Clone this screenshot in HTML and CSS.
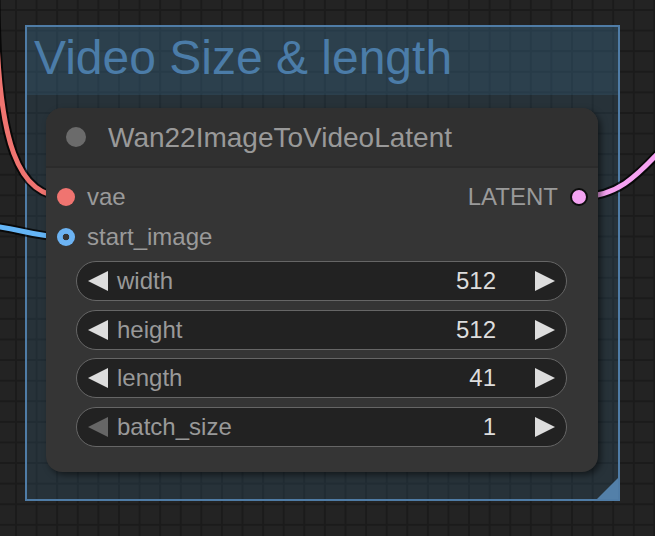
FILE: index.html
```html
<!DOCTYPE html>
<html>
<head>
<meta charset="utf-8">
<link rel="stylesheet" href="styles.css">
</head>
<body>
<div class="canvas">
  <div class="group">
    <div class="group-title">Video Size &amp; length</div>
    <div class="group-corner"></div>
  </div>
  <svg class="links" width="655" height="536" viewBox="0 0 655 536">
    <g fill="none" stroke-linecap="round">
      <path class="link-shadow" d="M -4 -10 C -4 150, 20 197, 66 197"/>
      <path class="link-red" d="M -4 -10 C -4 150, 20 197, 66 197"/>
      <path class="link-shadow" d="M -20 225 C 15 226, 30 237, 66 237"/>
      <path class="link-blue" d="M -20 225 C 15 226, 30 237, 66 237"/>
      <path class="link-shadow" d="M 579 197 C 615 197, 635 180, 670 140"/>
      <path class="link-pink" d="M 579 197 C 615 197, 635 180, 670 140"/>
    </g>
  </svg>
  <div class="node">
    <div class="node-header">
      <span class="node-dot"></span>
      <span class="node-title">Wan22ImageToVideoLatent</span>
    </div>
    <div class="node-body">
      <div class="slot-row">
        <div class="slot"><span class="dot dot-vae"></span><span>vae</span></div>
        <div class="slot slot-out"><span>LATENT</span><span class="dot dot-latent"></span></div>
      </div>
      <div class="slot-row">
        <div class="slot"><span class="dot dot-image"></span><span>start_image</span></div>
      </div>
      <div class="widgets">
        <div class="widget">
          <span class="arrow arrow-left"></span>
          <span class="w-label">width</span>
          <span class="w-value">512</span>
          <span class="arrow arrow-right"></span>
        </div>
        <div class="widget">
          <span class="arrow arrow-left"></span>
          <span class="w-label">height</span>
          <span class="w-value">512</span>
          <span class="arrow arrow-right"></span>
        </div>
        <div class="widget">
          <span class="arrow arrow-left"></span>
          <span class="w-label">length</span>
          <span class="w-value">41</span>
          <span class="arrow arrow-right"></span>
        </div>
        <div class="widget">
          <span class="arrow arrow-left arrow-disabled"></span>
          <span class="w-label">batch_size</span>
          <span class="w-value">1</span>
          <span class="arrow arrow-right"></span>
        </div>
      </div>
    </div>
  </div>
</div>
</body>
</html>
```
FILE: styles.css
```css
* { box-sizing: border-box; }

html, body {
  margin: 0;
  padding: 0;
  width: 655px;
  height: 536px;
  overflow: hidden;
}

body {
  font-family: "Liberation Sans", Arial, sans-serif;
  background-color: #232323;
  background-image:
    linear-gradient(to right, #1b1b1b 2px, transparent 2px),
    linear-gradient(to bottom, #1b1b1b 2px, transparent 2px);
  background-size: 20.6px 20.6px;
  background-position: 15px 9px;
}

.canvas {
  position: relative;
  width: 655px;
  height: 536px;
}

/* group */
.group {
  position: absolute;
  left: 25px;
  top: 25px;
  width: 595px;
  height: 476px;
  border: 2px solid #4f7ca6;
  background: rgba(63, 120, 158, 0.18);
}

.group-title {
  height: 68px;
  padding-left: 7px;
  background: rgba(63, 120, 158, 0.2);
  color: #4b7ca8;
  font-size: 48px;
  line-height: 62px;
  white-space: nowrap;
}

.group-corner {
  position: absolute;
  right: 0;
  bottom: 0;
  width: 21px;
  height: 21px;
  background: #5380a9;
  clip-path: polygon(100% 0, 100% 100%, 0 100%);
}

/* links */
.links {
  position: absolute;
  left: 0;
  top: 0;
}

.link-shadow {
  stroke: rgba(0, 0, 0, 0.75);
  stroke-width: 9;
}
.link-red { stroke: #f07470; stroke-width: 5; }
.link-blue { stroke: #64b5f6; stroke-width: 5; }
.link-pink { stroke: #f6a2f2; stroke-width: 5; }

/* node */
.node {
  position: absolute;
  left: 46px;
  top: 108px;
  width: 552px;
  height: 364px;
  background: #353535;
  border-radius: 16px;
  box-shadow: 3px 3px 6px rgba(0, 0, 0, 0.5);
  color: #9a9a9a;
}

.node-header {
  height: 60px;
  display: flex;
  align-items: center;
  padding-left: 20px;
  gap: 22px;
  background: #303030;
  border-bottom: 2px solid #2b2b2b;
  border-radius: 16px 16px 0 0;
}

.node-dot {
  width: 20px;
  height: 20px;
  border-radius: 50%;
  background: #6b6b6b;
}

.node-title {
  font-size: 28px;
  color: #999999;
  white-space: nowrap;
  padding-top: 2px;
}

.node-body {
  padding-top: 9px;
}

.slot-row {
  height: 40px;
  display: flex;
  align-items: center;
  justify-content: space-between;
  font-size: 24px;
}

.slot {
  display: flex;
  align-items: center;
  gap: 12px;
  padding-left: 11px;
}

.slot-out {
  padding-left: 0;
  padding-right: 10px;
  gap: 12px;
}

.dot {
  width: 18px;
  height: 18px;
  border-radius: 50%;
  flex: none;
}

.dot-vae { background: #f07470; }

.dot-image {
  background: radial-gradient(circle, #353535 0 3px, #6cb3f3 3.6px);
}

.dot-latent {
  background: #f4a3f2;
  border: 2px solid #0d0d0d;
}

/* widgets */
.widgets {
  margin-top: 4px;
  padding: 0 31px 0 30px;
  display: flex;
  flex-direction: column;
  gap: 8.7px;
}

.widget {
  height: 40px;
  border-radius: 20px;
  border: 1.5px solid #666666;
  background: #222222;
  display: flex;
  align-items: center;
  padding: 0 11px 0 11px;
  font-size: 24px;
}

.arrow {
  width: 0;
  height: 0;
  border-top: 10px solid transparent;
  border-bottom: 10px solid transparent;
  flex: none;
}

.arrow-left {
  border-right: 20px solid #dddddd;
  margin-right: 9px;
}

.arrow-right {
  border-left: 20px solid #dddddd;
  margin-left: 39px;
}

.arrow-disabled {
  border-right-color: #666666;
}

.w-label {
  flex: 1;
  color: #999999;
}

.w-value {
  color: #dddddd;
}
```
